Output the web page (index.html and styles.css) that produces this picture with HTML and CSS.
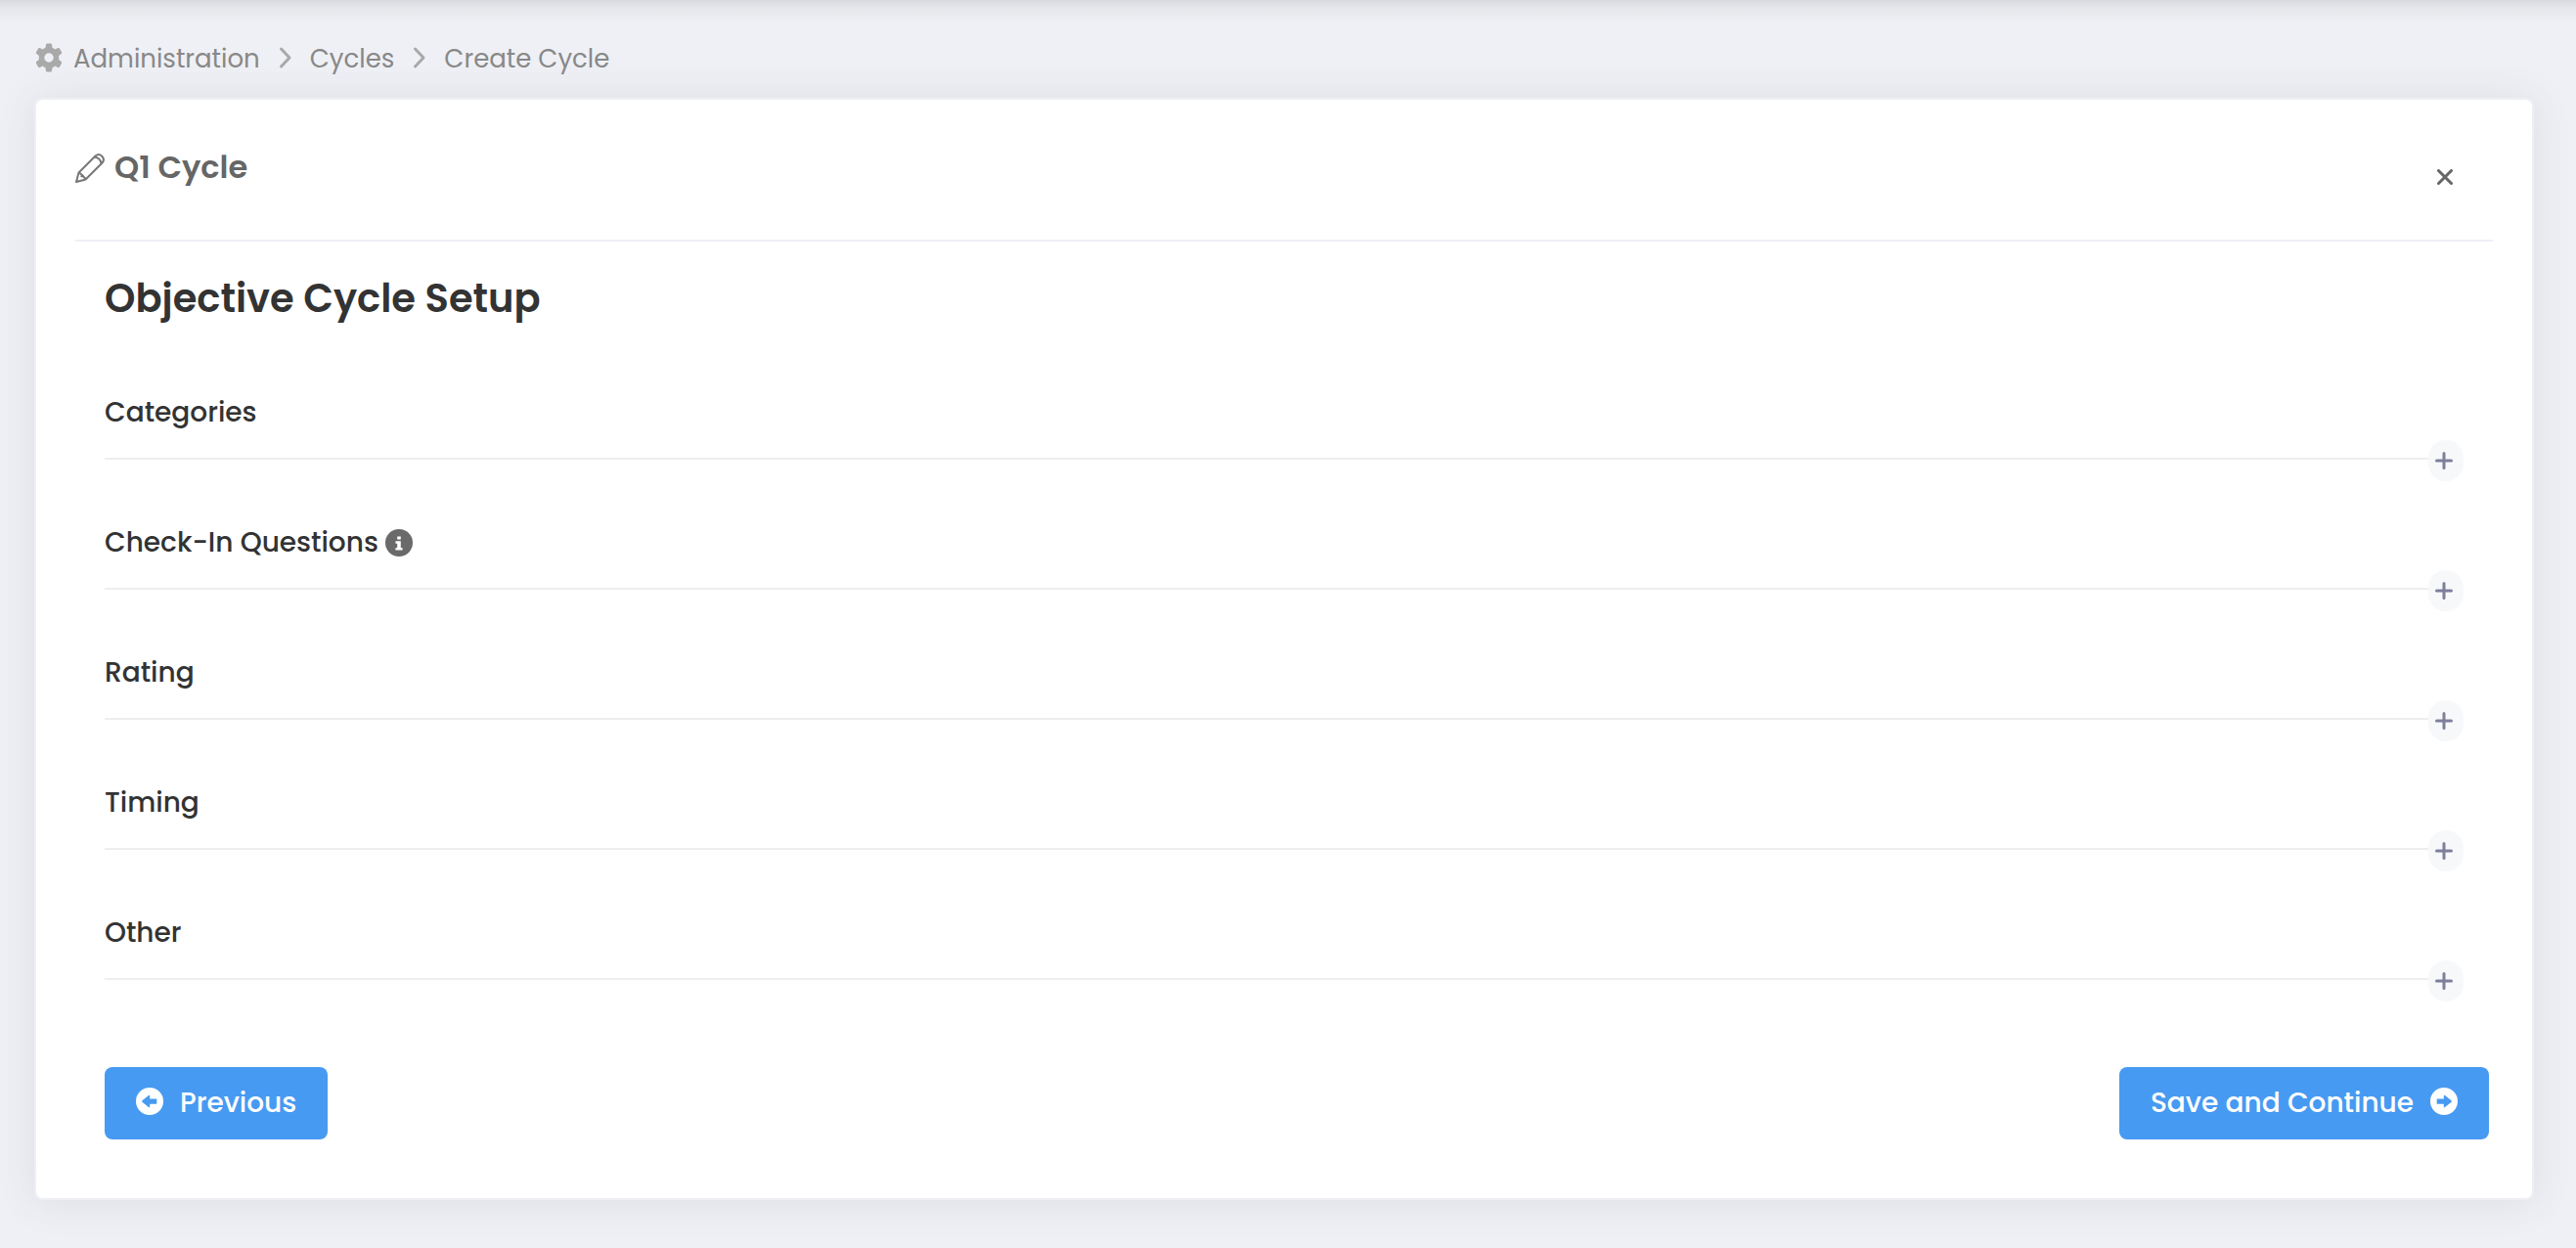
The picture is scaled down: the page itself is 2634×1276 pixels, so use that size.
FILE: index.html
```html
<!DOCTYPE html>
<html lang="en">
<head>
  <meta charset="UTF-8">
  <meta name="viewport" content="width=device-width, initial-scale=1">
  <title>Create Cycle</title>
  <link rel="stylesheet" href="styles.css">
</head>
<body>
  <nav class="breadcrumb" aria-label="Breadcrumb">
    <svg class="gear" viewBox="0 0 28 30" aria-hidden="true">
      <path fill-rule="evenodd" d="M11 1.500Q11.200 .5 12.200 .5H15.800Q16.800 .5 17 1.500L17.500 4.800Q19 5.400 20.300 6.400L23.300 5.100Q24.300 4.800 24.900 5.600L27 9.200Q27.500 10.200 26.700 10.900L24.100 12.900Q24.400 15 24.100 17.100L26.700 19.100Q27.500 19.800 27 20.800L24.900 24.400Q24.300 25.200 23.300 24.900L20.300 23.600Q19 24.600 17.500 25.200L17 28.500Q16.800 29.500 15.800 29.500H12.200Q11.200 29.500 11 28.500L10.500 25.200Q9 24.600 7.700 23.600L4.700 24.900Q3.700 25.200 3.100 24.400L1 20.800Q.5 19.800 1.300 19.100L3.900 17.100Q3.600 15 3.900 12.900L1.300 10.900Q.5 10.200 1 9.200L3.100 5.600Q3.700 4.800 4.700 5.100L7.700 6.400Q9 5.400 10.500 4.800ZM14 10.300A4.700 4.700 0 1 0 14 19.700A4.700 4.700 0 1 0 14 10.300Z"/>
    </svg>
    <a href="#">Administration</a>
    <svg class="chevron" viewBox="0 0 14 24" aria-hidden="true"><path d="M2.500 3L11 12L2.500 21"/></svg>
    <a href="#">Cycles</a>
    <svg class="chevron" viewBox="0 0 14 24" aria-hidden="true"><path d="M2.500 3L11 12L2.500 21"/></svg>
    <a href="#" aria-current="page">Create Cycle</a>
  </nav>

  <main class="card">
    <header class="card-header">
      <svg class="pencil" viewBox="0 0 30 30" aria-hidden="true">
        <path d="M1 29L3.500 19.500L20.500 2.500Q24 -.5 27.300 2.700Q30.500 6 27.500 9.500L10.500 26.500ZM4 19.500L7 22L10.500 26M7 22L6 24M20 3.500Q25.500 4.500 26.500 10"/>
      </svg>
      <h2>Q1 Cycle</h2>
      <button class="close-btn" type="button" aria-label="Close">
        <svg viewBox="0 0 16 16"><path d="M1.500 1.500L14.500 14.500M14.500 1.500L1.500 14.500"/></svg>
      </button>
    </header>

    <div class="card-body">
      <h1>Objective Cycle Setup</h1>

      <div class="sections">
        <section>
          <h3>Categories</h3>
          <div class="divider">
            <hr>
            <button class="expand-btn" type="button" aria-label="Expand Categories"><svg viewBox="0 0 18 18"><path d="M9 1.500V16.500M1.500 9H16.500"/></svg></button>
          </div>
        </section>

        <section>
          <h3>
            Check-In Questions
            <svg class="info" viewBox="0 0 28 28" aria-hidden="true">
              <circle cx="14" cy="14" r="14"/>
              <path d="M12.200 7.500H15.800V10.500H12.200ZM10.500 12.200H15.800V19H17.500V21.500H10.500V19H12.200V14.700H10.500Z"/>
            </svg>
          </h3>
          <div class="divider">
            <hr>
            <button class="expand-btn" type="button" aria-label="Expand Check-In Questions"><svg viewBox="0 0 18 18"><path d="M9 1.500V16.500M1.500 9H16.500"/></svg></button>
          </div>
        </section>

        <section>
          <h3>Rating</h3>
          <div class="divider">
            <hr>
            <button class="expand-btn" type="button" aria-label="Expand Rating"><svg viewBox="0 0 18 18"><path d="M9 1.500V16.500M1.500 9H16.500"/></svg></button>
          </div>
        </section>

        <section>
          <h3>Timing</h3>
          <div class="divider">
            <hr>
            <button class="expand-btn" type="button" aria-label="Expand Timing"><svg viewBox="0 0 18 18"><path d="M9 1.500V16.500M1.500 9H16.500"/></svg></button>
          </div>
        </section>

        <section>
          <h3>Other</h3>
          <div class="divider">
            <hr>
            <button class="expand-btn" type="button" aria-label="Expand Other"><svg viewBox="0 0 18 18"><path d="M9 1.500V16.500M1.500 9H16.500"/></svg></button>
          </div>
        </section>
      </div>

      <div class="actions">
        <button class="btn" type="button">
          <svg viewBox="0 0 28 28" aria-hidden="true"><path fill-rule="evenodd" d="M14 0A14 14 0 1 0 14 28A14 14 0 1 0 14 0ZM6.400 13.300L13 7.900Q14.200 7.400 14.200 8.600V11.400H21.300V16.800H14.200V19.400Q14.200 20.600 13 20.100L6.400 14.700Q5.700 14 6.400 13.300Z"/></svg>
          Previous
        </button>
        <button class="btn" type="button">
          Save and Continue
          <svg viewBox="0 0 28 28" aria-hidden="true"><path fill-rule="evenodd" d="M14 0A14 14 0 1 0 14 28A14 14 0 1 0 14 0ZM21.600 13.300L15 7.900Q13.800 7.400 13.800 8.600V11.400H6.700V16.800H13.800V19.400Q13.800 20.600 15 20.100L21.600 14.700Q22.300 14 21.600 13.300Z"/></svg>
        </button>
      </div>
    </div>
  </main>
</body>
</html>
```

FILE: styles.css
```css
* {
  box-sizing: border-box;
}
body {
  margin: 0;
  padding: 38px 43px 48px 35px;
  min-height: 100vh;
  font-family: Poppins, Inter, "Open Sans", sans-serif;
  font-size: 28px;
  line-height: 42px;
  color: #333;
  background: linear-gradient(#d8d9de, #e6e7eb 8px, #eff0f5 24px) no-repeat #eff0f5;
}
h1, h2, h3 {
  margin: 0;
}
svg {
  flex: none;
}
button {
  font: inherit;
  border: none;
  cursor: pointer;
}

/* Breadcrumb */
.breadcrumb {
  display: flex;
  align-items: center;
  margin: 0 0 20px 1px;
  font-size: 26px;
}
.breadcrumb a {
  padding-top: 3px;
  line-height: 39px;
  color: #888;
  text-decoration: none;
}
.gear {
  width: 28px;
  height: 30px;
  margin-right: 11px;
  fill: #a9a9a9;
}
.chevron {
  width: 14px;
  height: 24px;
  margin: 0 18px 0 19px;
  fill: none;
  stroke: #a9a9a9;
  stroke-width: 3;
  stroke-linecap: round;
  stroke-linejoin: round;
}

/* Card */
.card {
  padding: 0 40px 60px;
  background: #fff;
  background-clip: padding-box;
  border: 2px solid #eeeff3;
  border-radius: 8px;
  box-shadow: 0 2px 40px rgba(69, 65, 78, 0.1);
}
.card-header {
  display: flex;
  align-items: flex-start;
  padding: 45px 25px 40px 0;
  border-bottom: 2px solid #eff0f6;
}
.card-header h2 {
  flex: 1;
  font-size: 32px;
  font-weight: 600;
  line-height: 48px;
  color: #666;
}
.pencil {
  width: 30px;
  height: 30px;
  margin: 10px 10px 0 0;
  fill: none;
  stroke: #777;
  stroke-width: 2;
  stroke-linejoin: round;
}
.close-btn {
  display: flex;
  align-items: center;
  justify-content: center;
  width: 48px;
  height: 48px;
  margin-top: 10px;
  padding: 0;
  background: none;
}
.close-btn svg {
  width: 16px;
  height: 16px;
  stroke: #666;
  stroke-width: 3;
  stroke-linecap: round;
}
.card-body {
  padding: 28px 4px 0 30px;
}
.card-body h1 {
  font-size: 40px;
  font-weight: 600;
  line-height: 60px;
}

/* Sections */
.sections {
  display: flex;
  flex-direction: column;
  gap: 42px;
  padding: 66px 26px 67px 0;
}
.sections h3 {
  display: flex;
  align-items: center;
  gap: 7px;
  margin-bottom: 7px;
  font-size: 28px;
  font-weight: 500;
}
.info {
  width: 28px;
  height: 28px;
  fill: #6a6a6a;
}
.info path {
  fill: #fff;
}
.divider {
  display: flex;
  align-items: center;
}
.divider hr {
  flex: 1;
  margin: 0 0 4px;
  border: none;
  border-top: 2px solid #eee;
}
.expand-btn {
  display: flex;
  align-items: center;
  justify-content: center;
  width: 36px;
  height: 42px;
  padding: 0 4px 0 0;
  background: #f7f8fa;
  border-radius: 18px;
}
.expand-btn svg {
  width: 18px;
  height: 18px;
  stroke: #7f7f9b;
  stroke-width: 3;
  stroke-linecap: round;
}

/* Buttons */
.actions {
  display: flex;
  justify-content: space-between;
}
.btn {
  display: flex;
  align-items: center;
  gap: 17px;
  padding: 16px 32px;
  font-weight: 500;
  line-height: 42px;
  color: #fff;
  background: #479af1;
  border-radius: 8px;
}
.btn svg {
  width: 28px;
  height: 28px;
  margin-bottom: 5px;
  fill: #fff;
}
```
